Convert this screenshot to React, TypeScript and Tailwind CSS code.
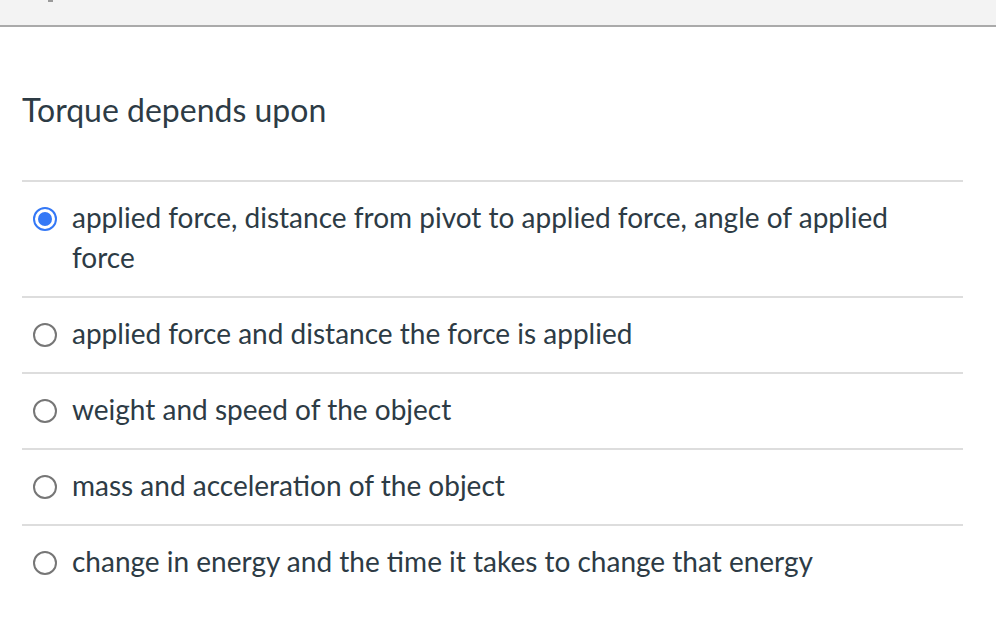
import React from 'react';

const options = [
  'applied force, distance from pivot to applied force, angle of applied force',
  'applied force and distance the force is applied',
  'weight and speed of the object',
  'mass and acceleration of the object',
  'change in energy and the time it takes to change that energy',
];

function Radio({ checked }: { checked: boolean }) {
  if (checked) {
    return (
      <span className="mt-[10px] flex h-[24px] w-[24px] shrink-0 items-center justify-center rounded-full border-[2px] border-[#3478f6] bg-white">
        <span className="h-[14px] w-[14px] rounded-full bg-[#3478f6]" />
      </span>
    );
  }
  return <span className="mt-[10px] h-[24px] w-[24px] shrink-0 rounded-full border-[2px] border-[#767676] bg-white" />;
}

export default function App() {
  return (
    <div className="min-h-[622px] w-[996px] bg-white font-['Lato','Liberation_Sans',sans-serif] text-[#2d3b45]">
      <div className="relative h-[27px] border-b-[2px] border-[#aaaaaa] bg-[#f3f3f3]">
        <span className="absolute left-[48px] top-0 h-[2px] w-[5px] bg-[#9a9a9a]" />
      </div>

      <div className="pl-[22px] pr-[33px]">
        <h2 className="pb-[50px] pt-[63px] text-[32px] leading-[40px] font-normal">Torque depends upon</h2>

        <div className="flex flex-col">
          {options.map((o, i) => (
            <div key={i} className="flex gap-[15px] border-t-[2px] border-[#dddddd] pb-[19px] pt-[15px] pl-[11px] pr-[40px]">
              <Radio checked={i === 0} />
              <span className="text-[28px] leading-[40px]">{o}</span>
            </div>
          ))}
        </div>
      </div>
    </div>
  );
}
